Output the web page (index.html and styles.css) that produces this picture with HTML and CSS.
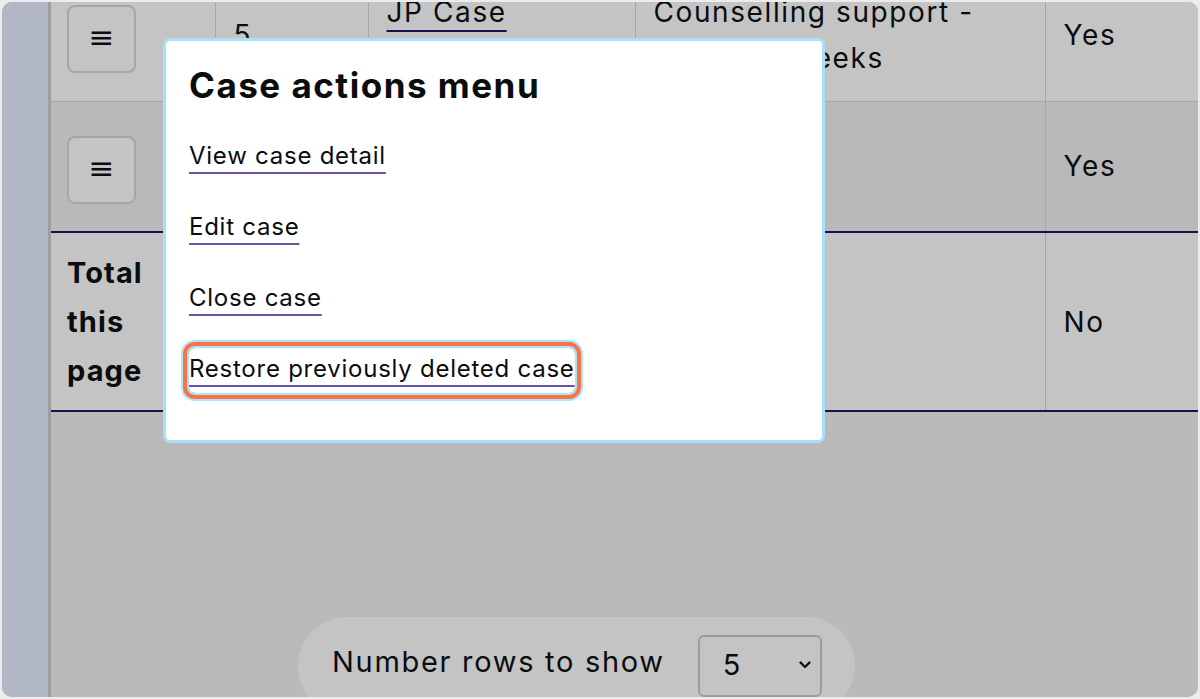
FILE: index.html
```html
<!DOCTYPE html>
<html lang="en">
<head>
<meta charset="utf-8">
<title>Cases</title>
<link rel="stylesheet" href="styles.css">
</head>
<body>
<div class="frame">
  <aside class="sidebar"></aside>
  <main class="main">
    <table class="cases">
      <colgroup>
        <col class="col-act">
        <col class="col-num">
        <col class="col-name">
        <col class="col-support">
        <col class="col-flag">
      </colgroup>
      <tbody>
        <tr class="data-row row-light">
          <td class="cell cell-act"><button class="menu-btn" type="button">≡</button></td>
          <td class="cell">5</td>
          <td class="cell"><a href="#" class="case-link">JP Case Reference</a></td>
          <td class="cell">Counselling support - eighteen weeks</td>
          <td class="cell">Yes</td>
        </tr>
        <tr class="data-row row-dark">
          <td class="cell cell-act"><button class="menu-btn" type="button">≡</button></td>
          <td class="cell">6</td>
          <td class="cell"><a href="#" class="case-link">AB Case</a></td>
          <td class="cell">Advice</td>
          <td class="cell">Yes</td>
        </tr>
      </tbody>
      <tfoot>
        <tr class="total-row">
          <th class="cell total-head" scope="row">Total this page</th>
          <td class="cell"></td>
          <td class="cell"></td>
          <td class="cell"></td>
          <td class="cell">No</td>
        </tr>
      </tfoot>
    </table>
    <div class="rows-control">
      <label class="rows-label" for="rows">Number rows to show</label>
      <div class="select-wrap">
        <select id="rows" class="rows-select">
          <option>5</option>
          <option>10</option>
          <option>25</option>
        </select>
        <svg class="chevron" width="14" height="10" viewBox="0 0 14 10" aria-hidden="true"><path d="M2.5 2.5 L7 7 L11.5 2.5" fill="none" stroke="#111" stroke-width="2.4" stroke-linecap="round" stroke-linejoin="round"/></svg>
      </div>
    </div>
  </main>

  <div class="menu" role="dialog" aria-label="Case actions menu">
    <h2 class="menu-title">Case actions menu</h2>
    <nav class="menu-links">
      <a href="#" class="menu-link">View case detail</a>
      <a href="#" class="menu-link">Edit case</a>
      <a href="#" class="menu-link">Close case</a>
      <a href="#" class="menu-link is-focused">Restore previously deleted case</a>
    </nav>
  </div>
</div>
</body>
</html>
```

FILE: styles.css
```css
* { box-sizing: border-box; }

html, body {
  margin: 0;
  padding: 0;
  background: #ececee;
}

body {
  font-family: Inter, "Noto Sans", sans-serif;
  color: #0b0c0c;
}

.frame {
  position: relative;
  margin: 2px;
  width: 1196px;
  height: 695px;
  border-radius: 10px;
  overflow: hidden;
  display: flex;
  background: #bababa;
}

.sidebar {
  flex: 0 0 49px;
  background: #b1b7c4;
  border-right: 3px solid #9e9e9e;
}

.main {
  flex: 1 1 auto;
  display: flex;
  flex-direction: column;
  align-items: flex-start;
  min-width: 0;
}

.cases {
  margin-top: -32px;
  width: 1147px;
  border-collapse: collapse;
  table-layout: fixed;
  font-size: 28px;
  letter-spacing: 1.6px;
}

.col-act { width: 164px; }
.col-num { width: 153px; }
.col-name { width: 267px; }
.col-support { width: 410px; }
.col-flag { width: 153px; }

.cell {
  padding: 0 18px;
  vertical-align: middle;
  text-align: left;
  line-height: 46px;
  border-left: 1px solid #a6a6a6;
  border-right: 1px solid #a6a6a6;
}

.cell:first-child { border-left: none; padding-left: 16px; }

.data-row { height: 131px; }
.row-light { background: #c4c4c4; border-bottom: 1px solid #a6a6a6; }
.row-dark { background: #b9b9b9; border-bottom: 2px solid #1e0d4f; }

.total-row {
  height: 179px;
  background: #c4c4c4;
  border-bottom: 2px solid #1e0d4f;
}

.total-head {
  font-weight: 700;
  font-size: 29px;
  line-height: 49px;
  letter-spacing: 1.1px;
}

.menu-btn {
  display: flex;
  align-items: center;
  justify-content: center;
  margin-top: 8px;
  width: 69px;
  height: 68px;
  border: 2px solid #a6a6a6;
  border-radius: 8px;
  background: #c4c4c4;
  color: #0b0c0c;
  font-family: "DejaVu Sans", sans-serif;
  font-size: 31px;
  line-height: 1;
  letter-spacing: 0;
  padding: 0 0 4px;
}

.case-link {
  color: #0b0c0c;
  text-decoration: underline;
  text-decoration-color: #1e0d4f;
  text-decoration-thickness: 2px;
  text-underline-offset: 8px;
}

.rows-control {
  margin-top: 205px;
  margin-left: 247px;
  display: flex;
  align-items: center;
  gap: 33px;
  padding: 18px 34px;
  width: 557px;
  background: #c4c4c4;
  border-radius: 50px;
}

.rows-label {
  font-size: 29px;
  letter-spacing: 1.7px;
  white-space: nowrap;
  padding-bottom: 9px;
}

.select-wrap {
  position: relative;
  flex: 0 0 auto;
}

.rows-select {
  appearance: none;
  -webkit-appearance: none;
  width: 124px;
  height: 62px;
  padding: 0 0 3px 23px;
  border: 2px solid #9c9c9c;
  border-radius: 6px;
  background: #c4c4c4;
  color: #0b0c0c;
  font-family: Inter, "Noto Sans", sans-serif;
  font-size: 29px;
}

.chevron {
  position: absolute;
  right: 10px;
  top: 25px;
  pointer-events: none;
}

.menu {
  position: absolute;
  left: 161px;
  top: 36px;
  width: 662px;
  height: 405px;
  background: #fff;
  border: 3px solid #a5e2f8;
  border-radius: 7px;
  padding: 24px 23px;
}

.menu-title {
  margin: 0 0 30px;
  font-size: 35px;
  line-height: 40px;
  font-weight: 700;
  letter-spacing: 1.5px;
}

.menu-links {
  display: flex;
  flex-direction: column;
  align-items: flex-start;
  gap: 26px;
}

.menu-link {
  display: inline-block;
  padding: 3px 0 6px;
  font-size: 24px;
  line-height: 36px;
  letter-spacing: 0.75px;
  color: #0b0c0c;
  text-decoration: underline;
  text-decoration-color: #6f52a3;
  text-decoration-thickness: 1.5px;
  text-underline-offset: 8px;
  border-radius: 6px;
}

.menu-link.is-focused {
  box-shadow: 0 0 0 2px #a8e6fb, 0 0 0 6px #ff7142, 0 0 0 8px #a8e6fb;
}
```
